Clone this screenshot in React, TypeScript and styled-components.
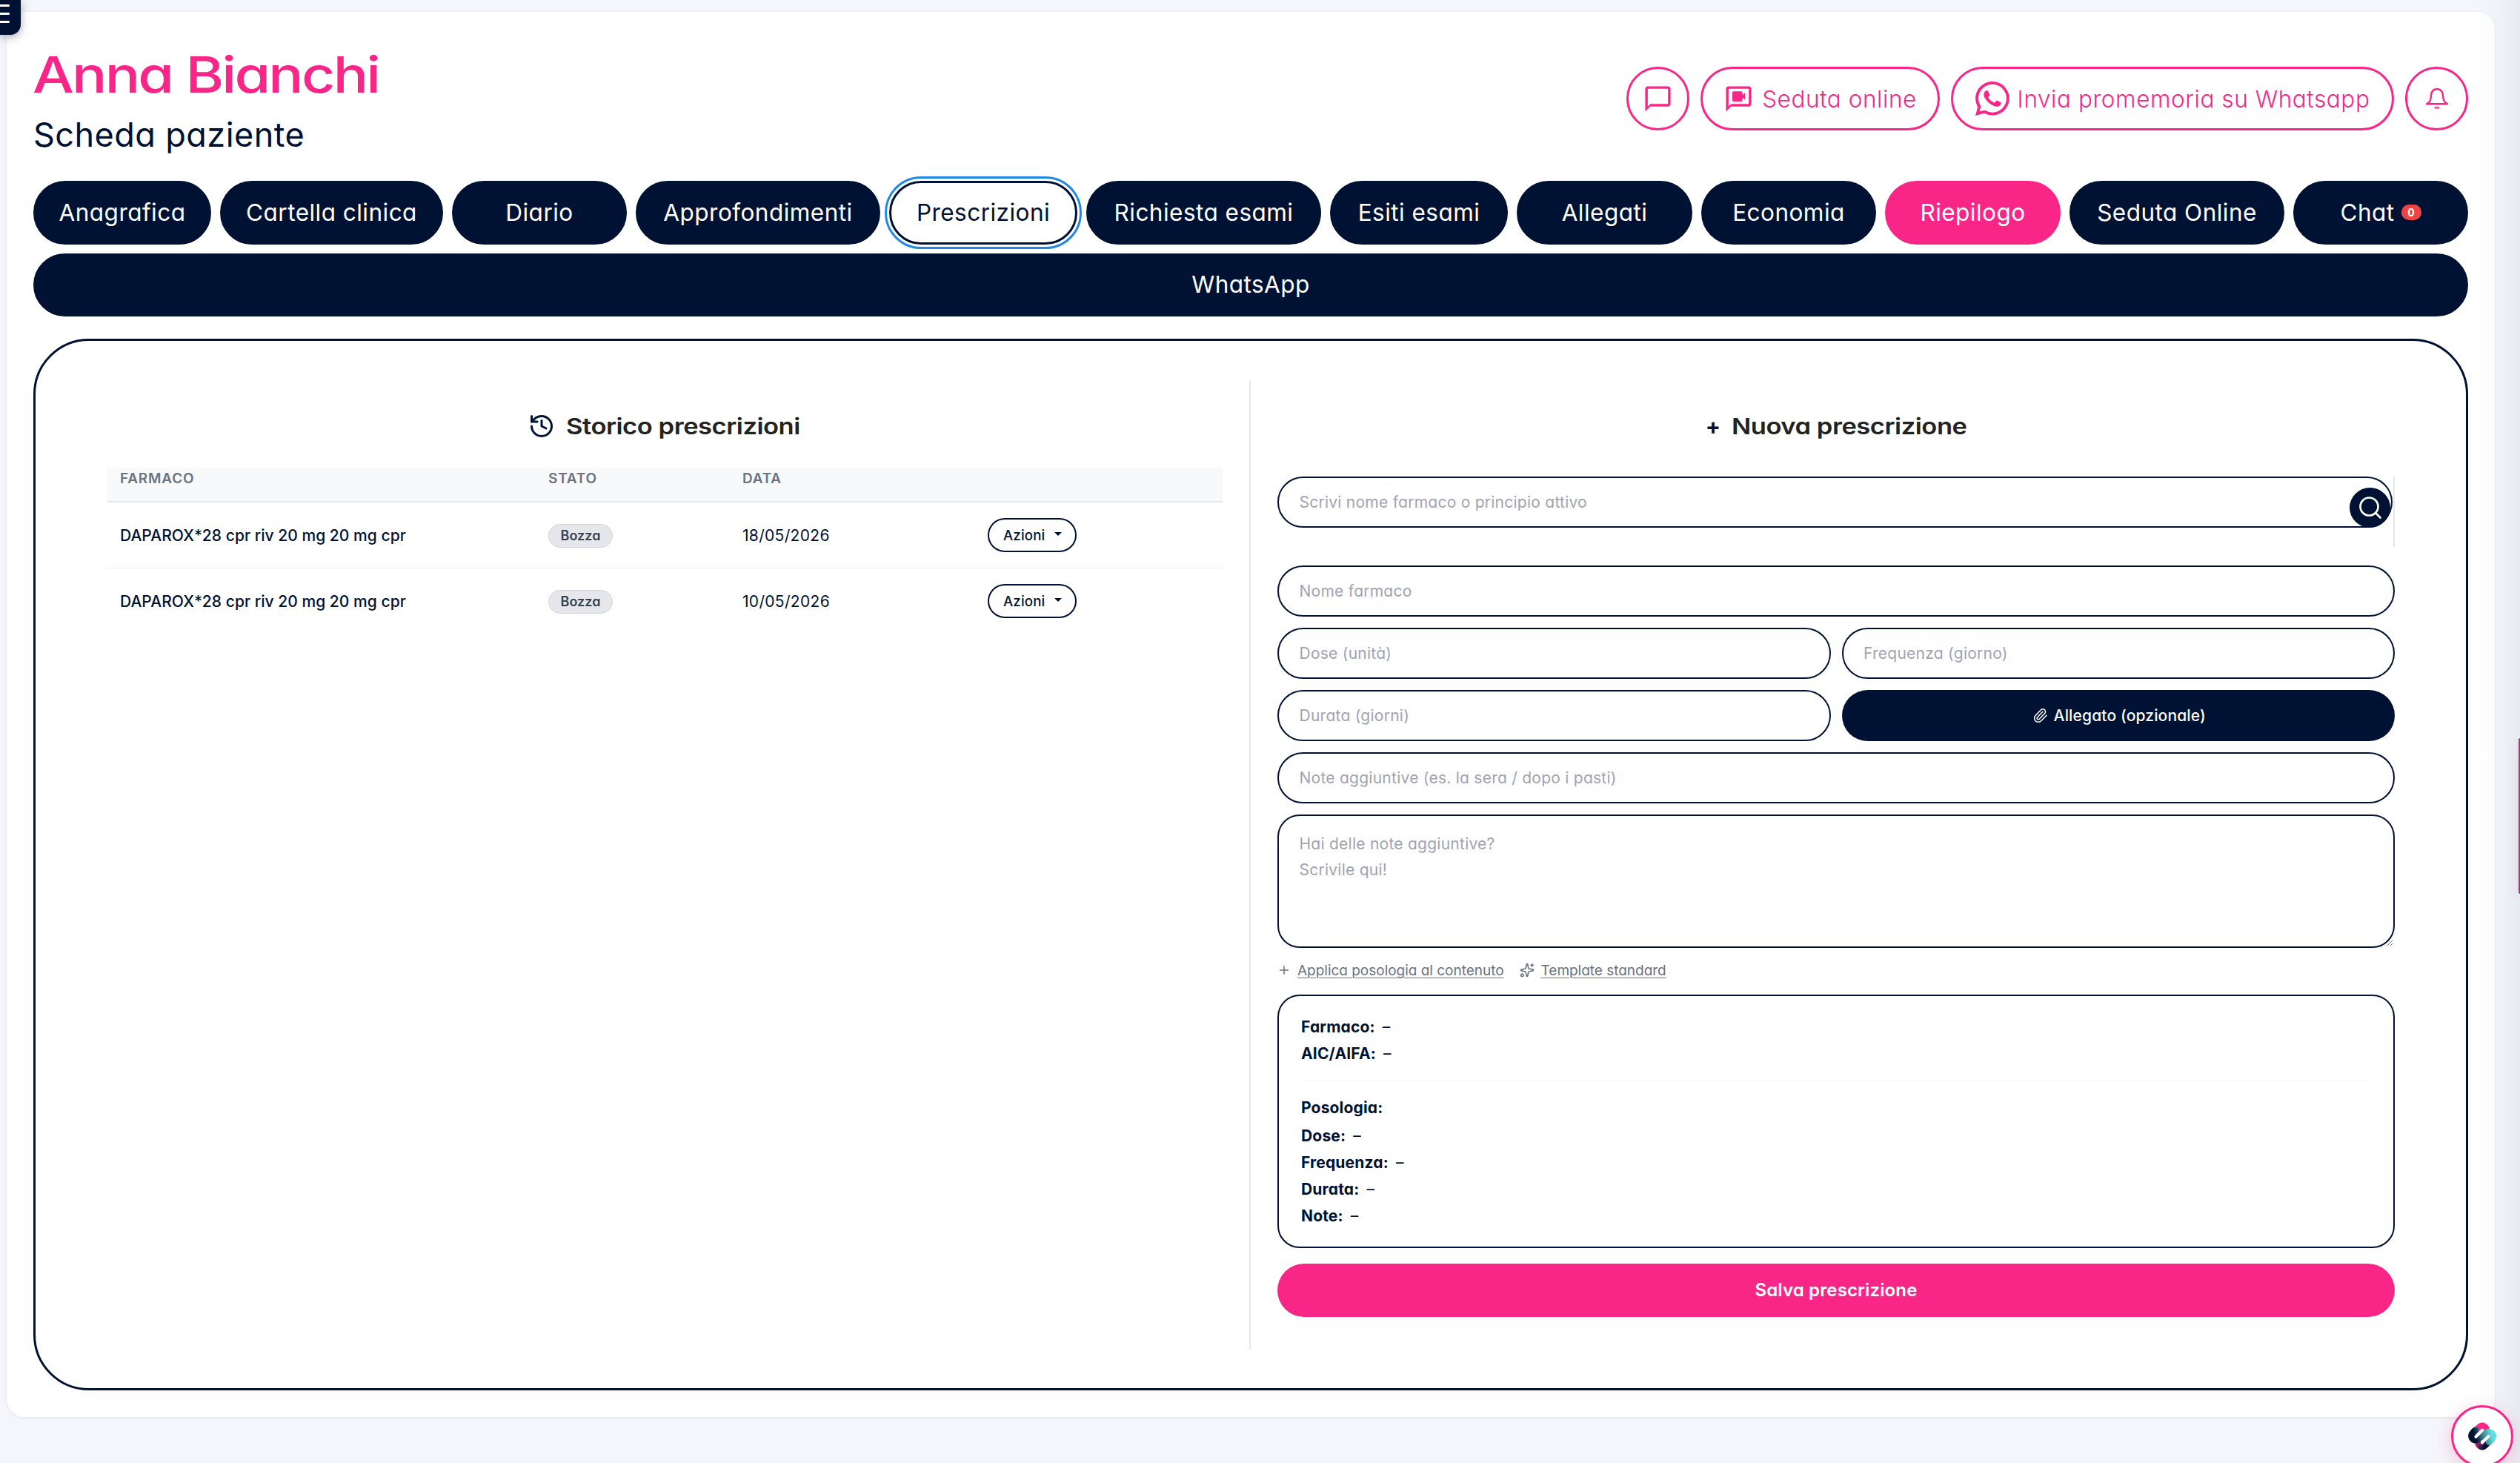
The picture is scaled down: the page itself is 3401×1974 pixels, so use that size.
import React from 'react';
import styled, { createGlobalStyle, css } from 'styled-components';
import { History, Paperclip, Plus, Search, Sparkles } from 'lucide-react';
import { BsWhatsapp } from 'react-icons/bs';

const navy = '#001233';
const pink = '#f92688';

const GlobalStyle = createGlobalStyle`
  * { box-sizing: border-box; }
  html, body { margin: 0; height: 100%; overflow: hidden; }
  body {
    background: #f5f6fb;
    color: ${navy};
    font-family: Inter, "Noto Sans", sans-serif;
    font-feature-settings: "cv11";
  }
  button, input, textarea {
    font-family: inherit;
    font-feature-settings: inherit;
  }
`;

const Page = styled.div`
  height: 1974px;
  padding: 16px 34px 0 9px;
  overflow: hidden;
`;

const Card = styled.main`
  height: 1896px;
  padding: 50px 36px 0;
  border-radius: 24px;
  background: #fff;
  box-shadow: 0 1px 5px rgba(0, 18, 51, 0.08);
`;

const Header = styled.header`
  display: flex;
  justify-content: space-between;
  align-items: flex-start;
  height: 162px;
`;

const PatientName = styled.h1`
  margin: 0;
  font-size: 67px;
  font-weight: 500;
  line-height: 69px;
  letter-spacing: -0.035em;
  color: ${pink};
  white-space: nowrap;
  transform: scaleX(1.175);
  transform-origin: left;
  margin-left: -1px;
`;

const Subtitle = styled.p`
  margin: 0;
  font-size: 45px;
  font-weight: 380;
  line-height: 93px;
  letter-spacing: 0.01em;
`;

const HeaderActions = styled.div`
  display: flex;
  gap: 15px;
  margin-top: 24px;
`;

const PillButton = styled.button<{ $width: number }>`
  display: flex;
  align-items: center;
  justify-content: center;
  width: ${(p) => p.$width}px;
  height: 86px;
  padding: 0;
  border: 3px solid ${pink};
  border-radius: 43px;
  background: #fff;
  color: ${pink};
  font-size: 31.5px;
  font-weight: 340;
  letter-spacing: 0.018em;
  white-space: nowrap;
`;

const PillLabel = styled.span`
  margin-left: 11px;
`;

const Tabs = styled.nav`
  display: flex;
  flex-wrap: wrap;
  gap: 12px;
  margin-top: 16px;
`;

type TabTone = 'navy' | 'pink' | 'active';

const Tab = styled.button<{ $width: number; $tone: TabTone }>`
  display: flex;
  align-items: center;
  justify-content: center;
  gap: 9px;
  width: ${(p) => p.$width}px;
  height: 85.5px;
  padding: 0 0 1px;
  border: 3px solid ${navy};
  border-radius: 43px;
  background: ${navy};
  color: #fff;
  font-size: 31.5px;
  font-weight: 370;
  letter-spacing: 0.015em;
  white-space: nowrap;
  ${(p) => p.$tone === 'pink' && css`
    border-color: ${pink};
    background: ${pink};
  `}
  ${(p) => p.$tone === 'active' && css`
    background: #fff;
    color: ${navy};
    outline: 3px solid #1e88e5;
    outline-offset: 3px;
  `}
`;

const Count = styled.span`
  width: 27px;
  height: 21px;
  border-radius: 10px;
  background: #ef4444;
  font-size: 14px;
  font-weight: 700;
  line-height: 21px;
  letter-spacing: 0;
  text-align: center;
`;

const Panel = styled.section`
  display: grid;
  grid-template-columns: 1640px 1fr;
  height: 1419px;
  margin-top: 30px;
  padding: 54px 0;
  border: 3px solid ${navy};
  border-radius: 75px;
`;

const HistoryColumn = styled.div`
  height: 1306px;
  padding: 36px 36px 0 96px;
  border-right: 2px solid #e5e7eb;
`;

const FormColumn = styled.div`
  height: 1306px;
  padding: 36px 96px 0 36px;
`;

const ColumnTitle = styled.h2<{ $gap: number }>`
  display: flex;
  align-items: center;
  justify-content: center;
  gap: 15px;
  height: 50px;
  margin: 0 0 ${(p) => p.$gap}px;
  font-size: 30px;
  font-weight: 600;
`;

const TitleText = styled.span`
  width: 317px;
  color: #222;
  letter-spacing: -0.013em;
  white-space: nowrap;
  transform: scaleX(1.15);
  transform-origin: left;
`;

const TitlePlus = styled.span`
  font-weight: 700;
  line-height: 30px;
`;

const tableColumns = '578px 262px 331px 1fr';

const TableHead = styled.div`
  display: grid;
  grid-template-columns: ${tableColumns};
  height: 47px;
  padding-left: 18px;
  border-bottom: 2px solid #e5e7eb;
  background: #f8f9fb;
  color: #6b7280;
  font-size: 18.9px;
  font-weight: 600;
  line-height: 30px;
  letter-spacing: 0.045em;
`;

const TableRow = styled.div`
  display: grid;
  grid-template-columns: ${tableColumns};
  align-items: center;
  height: 89px;
  padding-left: 18px;
  border-bottom: 1px solid #eceef1;
  font-size: 21px;
  &:last-child { border-bottom-color: transparent; }
`;

const Drug = styled.span`
  font-weight: 500;
  letter-spacing: 0.002em;
`;

const DateCell = styled.span`
  letter-spacing: 0.015em;
`;

const StatusBadge = styled.span`
  justify-self: start;
  width: 87px;
  height: 32px;
  margin-top: 1px;
  border: 1px solid #d1d5db;
  border-radius: 16px;
  background: #e5e7eb;
  color: #374151;
  font-size: 18px;
  font-weight: 600;
  line-height: 30px;
  text-align: center;
`;

const ActionsButton = styled.button`
  display: flex;
  align-items: center;
  justify-content: space-between;
  width: 120px;
  height: 46px;
  padding: 0 18px 0 19px;
  border: 2px solid ${navy};
  border-radius: 23px;
  background: #fff;
  color: ${navy};
  font-size: 18.6px;
  font-weight: 500;
  letter-spacing: 0.01em;
`;

const Caret = styled.i`
  margin-top: -3px;
  border: 5px solid transparent;
  border-top-color: ${navy};
  border-bottom: 0;
`;

const fieldText = css`
  border: 2px solid ${navy};
  background: #fff;
  color: ${navy};
  font-size: 21px;
  letter-spacing: 0.012em;
  &::placeholder { color: #a0a3b1; opacity: 1; }
`;

const Field = styled.input`
  display: block;
  width: 100%;
  height: 69px;
  padding: 0 27.5px;
  border-radius: 34.5px;
  outline: none;
  ${fieldText}
`;

const SearchBox = styled.div`
  position: relative;
  height: 95px;
  margin-bottom: 25px;
  padding-right: 1px;
  border-right: 2px solid #e5e7eb;
`;

const SearchButton = styled.button`
  position: absolute;
  top: 15px;
  right: 4px;
  display: flex;
  align-items: center;
  justify-content: center;
  width: 55px;
  height: 54px;
  padding: 0;
  border: 0;
  border-radius: 50%;
  background: ${navy};
  color: #fff;
`;

const Fields = styled.div`
  display: grid;
  grid-template-columns: 1fr 1fr;
  gap: 15px;
`;

const Wide = styled.div`
  grid-column: 1 / -1;
`;

const AttachButton = styled.button`
  display: flex;
  align-items: center;
  justify-content: center;
  gap: 8px;
  height: 69px;
  padding: 0 0 0 2px;
  border: 0;
  border-radius: 34.5px;
  background: ${navy};
  color: #fff;
  font-size: 21px;
  font-weight: 500;
  letter-spacing: 0.007em;
`;

const Notes = styled.textarea`
  display: block;
  width: 100%;
  height: 180px;
  padding: 21px 27.5px;
  border-radius: 30px;
  line-height: 34.5px;
  outline: none;
  ${fieldText}
`;

const Links = styled.div`
  display: flex;
  align-items: center;
  gap: 21px;
  height: 63px;
  padding-bottom: 3px;
`;

const TextLink = styled.a`
  display: flex;
  align-items: center;
  gap: 9px;
  color: #6b7280;
  font-size: 19px;
  letter-spacing: -0.001em;
`;

const LinkLabel = styled.span`
  text-decoration: underline;
  text-decoration-thickness: 1px;
  text-underline-offset: 3px;
`;

const Summary = styled.div`
  height: 342px;
  padding: 24px 30px;
  border: 2px solid ${navy};
  border-radius: 30px;
  font-size: 21px;
  line-height: 36px;
`;

const SummaryLine = styled.div`
  display: flex;
  gap: 10px;
`;

const SummaryLabel = styled.b`
  letter-spacing: 0.008em;
`;

const Rule = styled.div`
  height: 1px;
  margin: 18px 0;
  background: #fafafb;
`;

const Doses = styled.div`
  margin-top: 2px;
`;

const SaveButton = styled.button`
  display: block;
  width: 100%;
  height: 72px;
  margin-top: 21px;
  padding: 0 0 1px;
  border: 0;
  border-radius: 36px;
  background: ${pink};
  color: #fff;
  font-size: 24px;
  font-weight: 600;
  letter-spacing: 0.006em;
`;

const MenuToggle = styled.button`
  position: fixed;
  top: 0;
  left: 0;
  display: flex;
  flex-direction: column;
  gap: 8px;
  width: 28px;
  height: 47px;
  padding: 6px 0 0;
  border: 0;
  border-radius: 0 0 14px 0;
  background: ${navy};
  box-shadow: 0 3px 12px rgba(0, 18, 51, 0.35);
`;

const MenuBar = styled.span`
  width: 13px;
  height: 3px;
  border-radius: 0 2px 2px 0;
  background: #fff;
`;

const EdgeShade = styled.div`
  position: fixed;
  top: 0;
  right: 0;
  width: 60px;
  height: 100%;
  background: linear-gradient(to right, rgba(20, 70, 80, 0), rgba(20, 70, 80, 0.015) 45%, rgba(20, 80, 80, 0.06));
  pointer-events: none;
`;

const EdgeTab = styled.div`
  position: fixed;
  top: 996px;
  right: 0;
  width: 2px;
  height: 210px;
  border-radius: 2px 0 0 2px;
  background: #c9267c;
  box-shadow: 0 4px 16px rgba(249, 38, 136, 0.4);
`;

const AssistantButton = styled.button`
  position: fixed;
  top: 1896px;
  left: 3308px;
  display: flex;
  align-items: center;
  justify-content: center;
  width: 84px;
  height: 84px;
  padding: 0;
  border: 3px solid ${pink};
  border-radius: 50%;
  background: #fff;
  box-shadow: 0 6px 24px rgba(249, 38, 136, 0.25);
`;

const bubble = 'M20 2H4c-1.1 0-2 .9-2 2v18l4-4h14c1.100 0 2-.9 2-2V4c0-1.100-.9-2-2-2zm0 14H6l-2 2V4h16v12z';

const ChatIcon = () => (
  <svg width="41" height="41" viewBox="0 0 24 24" fill="currentColor"><path d={bubble} /></svg>
);

const VideoChatIcon = () => (
  <svg width="41" height="41" viewBox="0 0 24 24" fill="currentColor">
    <path d={bubble} />
    <path d="M8 6h6a1 1 0 0 1 1 1v2l2-1.8v5.6l-2-1.8v2a1 1 0 0 1-1 1H8a1 1 0 0 1-1-1V7a1 1 0 0 1 1-1z" />
  </svg>
);

const BellIcon = () => (
  <svg width="32" height="32" viewBox="0 0 32 32" fill="none" stroke="currentColor" strokeWidth="2.4">
    <path d="M2 23.2C6.6 21 7.6 18 8 12C8.3 6.5 11 3.3 16 3.3S23.7 6.5 24 12C24.4 18 25.4 21 30 23.2Z" strokeLinejoin="round" />
    <path d="M13.8 28.4H18.2" strokeLinecap="round" />
  </svg>
);

const Logo = () => (
  <svg width="38" height="38" viewBox="0 0 113 113" fill="none" strokeLinecap="round" strokeLinejoin="round">
    <defs>
      <linearGradient id="ribbon" gradientUnits="userSpaceOnUse" x1="22" y1="62" x2="92" y2="40">
        <stop offset="0.1" stopColor="#001233" />
        <stop offset="0.5" stopColor="#3b7f8c" />
        <stop offset="1" stopColor="#62dfdf" />
      </linearGradient>
      <linearGradient id="base" gradientUnits="userSpaceOnUse" x1="32" y1="82" x2="66" y2="100">
        <stop offset="0" stopColor="#c3247a" />
        <stop offset="1" stopColor="#001233" />
      </linearGradient>
    </defs>
    <path d="M34 32L44 21Q56 9 68 20L72 27" stroke={pink} strokeWidth="27" />
    <path d="M41 86L45 92Q56 104 68 92L78 82" stroke="url(#base)" strokeWidth="27" />
    <path d="M29 33L20 42C6 56 20 78 37 68L73 43C91 33 108 52 94 68L84 78" stroke="url(#ribbon)" strokeWidth="28" />
    <path d="M31 58L57 32M56 82L82 56" stroke="#fff" strokeWidth="12" />
  </svg>
);

const tabs: { label: string; width: number; tone?: TabTone; count?: number }[] = [
  { label: 'Anagrafica', width: 240 },
  { label: 'Cartella clinica', width: 301 },
  { label: 'Diario', width: 236 },
  { label: 'Approfondimenti', width: 330 },
  { label: 'Prescrizioni', width: 254, tone: 'active' },
  { label: 'Richiesta esami', width: 317 },
  { label: 'Esiti esami', width: 240 },
  { label: 'Allegati', width: 237 },
  { label: 'Economia', width: 236 },
  { label: 'Riepilogo', width: 237, tone: 'pink' },
  { label: 'Seduta Online', width: 290 },
  { label: 'Chat', width: 236, count: 0 },
  { label: 'WhatsApp', width: 3286 },
];

const prescriptions = [
  { drug: 'DAPAROX*28 cpr riv 20 mg 20 mg cpr', status: 'Bozza', date: '18/05/2026' },
  { drug: 'DAPAROX*28 cpr riv 20 mg 20 mg cpr', status: 'Bozza', date: '10/05/2026' },
];

const Line = ({ label, value }: { label: string; value?: string }) => (
  <SummaryLine>
    <SummaryLabel>{label}</SummaryLabel>
    {value && <span>{value}</span>}
  </SummaryLine>
);

export default function App() {
  return (
    <>
      <GlobalStyle />
      <Page>
        <Card>
          <Header>
            <div>
              <PatientName>Anna Bianchi</PatientName>
              <Subtitle>Scheda paziente</Subtitle>
            </div>
            <HeaderActions>
              <PillButton $width={85}><ChatIcon /></PillButton>
              <PillButton $width={323}>
                <VideoChatIcon />
                <PillLabel>Seduta online</PillLabel>
              </PillButton>
              <PillButton $width={598}>
                <BsWhatsapp size={46} />
                <PillLabel>Invia promemoria su Whatsapp</PillLabel>
              </PillButton>
              <PillButton $width={85}><BellIcon /></PillButton>
            </HeaderActions>
          </Header>

          <Tabs>
            {tabs.map((t) => (
              <Tab key={t.label} $width={t.width} $tone={t.tone ?? 'navy'}>
                {t.label}
                {t.count !== undefined && <Count>{t.count}</Count>}
              </Tab>
            ))}
          </Tabs>

          <Panel>
            <HistoryColumn>
              <ColumnTitle $gap={31}>
                <History size={36} strokeWidth={2} />
                <TitleText>Storico prescrizioni</TitleText>
              </ColumnTitle>
              <TableHead>
                <span>FARMACO</span>
                <span>STATO</span>
                <span>DATA</span>
              </TableHead>
              {prescriptions.map((p) => (
                <TableRow key={p.date}>
                  <Drug>{p.drug}</Drug>
                  <StatusBadge>{p.status}</StatusBadge>
                  <DateCell>{p.date}</DateCell>
                  <ActionsButton>Azioni<Caret /></ActionsButton>
                </TableRow>
              ))}
            </HistoryColumn>

            <FormColumn>
              <ColumnTitle $gap={43}>
                <TitlePlus>+</TitlePlus>
                <TitleText>Nuova prescrizione</TitleText>
              </ColumnTitle>
              <SearchBox>
                <Field placeholder="Scrivi nome farmaco o principio attivo" />
                <SearchButton><Search size={36} strokeWidth={1.8} /></SearchButton>
              </SearchBox>
              <Fields>
                <Wide><Field placeholder="Nome farmaco" /></Wide>
                <Field placeholder="Dose (unità)" />
                <Field placeholder="Frequenza (giorno)" />
                <Field placeholder="Durata (giorni)" />
                <AttachButton><Paperclip size={21} strokeWidth={1.8} />Allegato (opzionale)</AttachButton>
                <Wide><Field placeholder="Note aggiuntive (es. la sera / dopo i pasti)" /></Wide>
                <Wide><Notes placeholder={'Hai delle note aggiuntive?\nScrivile qui!'} /></Wide>
              </Fields>
              <Links>
                <TextLink><Plus size={18} strokeWidth={2} /><LinkLabel>Applica posologia al contenuto</LinkLabel></TextLink>
                <TextLink><Sparkles size={20} strokeWidth={2} /><LinkLabel>Template standard</LinkLabel></TextLink>
              </Links>
              <Summary>
                <Line label="Farmaco:" value="–" />
                <Line label="AIC/AIFA:" value="–" />
                <Rule />
                <Line label="Posologia:" />
                <Doses>
                  <Line label="Dose:" value="–" />
                  <Line label="Frequenza:" value="–" />
                  <Line label="Durata:" value="–" />
                  <Line label="Note:" value="–" />
                </Doses>
              </Summary>
              <SaveButton>Salva prescrizione</SaveButton>
            </FormColumn>
          </Panel>
        </Card>
      </Page>
      <EdgeShade />
      <EdgeTab />
      <MenuToggle><MenuBar /><MenuBar /><MenuBar /></MenuToggle>
      <AssistantButton><Logo /></AssistantButton>
    </>
  );
}
